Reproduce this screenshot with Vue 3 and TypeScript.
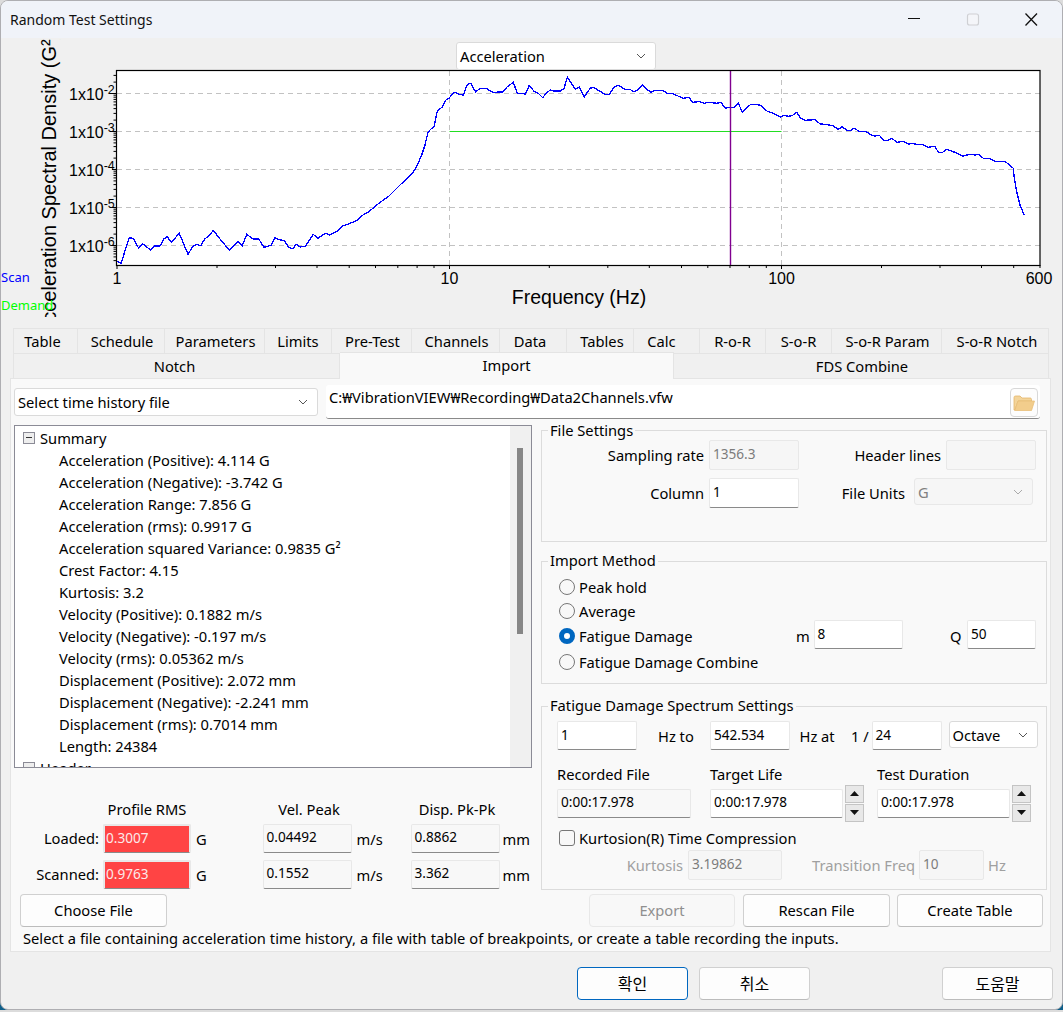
<script setup lang="ts">
const scale = (pts: number[], ox: number, oy: number): string[] => {
  const out: string[] = []
  for (let i = 0; i < pts.length; i += 2) out.push(`${(ox + pts[i] / 3).toFixed(1)},${(oy + pts[i + 1] / 3).toFixed(1)}`)
  return out
}
const segA = [0,137,15,145,40,68,52,70,68,100,80,86,104,106,115,93,132,93,143,72,154,65,166,82,190,55,216,118,232,92,243,88,254,92,266,72,280,62,292,46,312,72,340,106,366,80,379,92,392,58,412,72,428,72,444,97,465,91,477,68,490,74,505,77,518,97,530,101,541,88,553,96,568,94,592,58,605,70,628,55,642,60,665,48,678,33,698,27,718,18]
const segB = [20,452,40,434,55,427,80,405,100,390,115,380,150,345,185,312,200,290,215,255,225,225,233,190,240,180,253,168,260,130,265,120,276,112,288,90,298,84,312,66,325,72,340,76,352,43,362,40,377,66,390,55,408,55,428,67,458,66,470,52,490,37,502,70,526,72,538,46,552,64,565,70,578,83,592,66,602,60,612,63,632,63,642,55,652,22,676,58,688,52,703,80,717,60]
const segC = [0,55,10,52,30,64,45,73,58,73,72,52,85,46,105,58,120,58,132,66,145,58,157,44,170,58,183,67,193,61,220,62,232,70,250,71,278,85,298,82,307,97,328,95,342,100,358,97,380,100,393,97,406,115,415,112,433,112,445,100,457,126,482,103,510,105,532,124,550,130,572,142,580,136,596,139,608,136,620,127,632,145,644,151,662,150,675,148,690,162]
const segD = [14,43,38,47,55,58,67,50,80,61,92,61,102,55,118,64,135,64,155,75,165,78,178,76,192,91,205,91,216,85,230,97,250,94,268,103,275,100,290,103,310,104,325,112,345,109,355,127,368,127,380,118,410,129,428,139,448,133,465,135,475,133,490,145,510,146,525,154,555,154,580,175,583,205,590,245,600,285,613,316]
const curve = [...scale(segA, 116, 215), ...scale(segB, 350, 70), ...scale(segC, 590, 70), ...scale(segD, 820, 110)].join(' ')

const fx = (f: number) => 117 + 332.25 * Math.log10(f)
const fy = (v: number) => 93.5 - 38 * (Math.log10(v) + 2)
const xMinor: number[] = []
const yMinor: number[] = []
for (let k = 0; k < 3; k++) for (let m = 2; m <= 9; m++) { const f = m * 10 ** k; if (f <= 600) xMinor.push(fx(f)) }
for (let k = -7; k < -1; k++) for (let m = 1; m <= 9; m++) { const y = fy(m * 10 ** k); if (y > 71 && y < 265) yMinor.push(y) }
const decades = [{ y: 93.5, e: '-2' }, { y: 131.5, e: '-3' }, { y: 169.5, e: '-4' }, { y: 207.5, e: '-5' }, { y: 245.5, e: '-6' }]
const xMajor = [{ x: 117, t: '1' }, { x: 449.5, t: '10' }, { x: 781.5, t: '100' }]

// nudge: horizontal shift of a tab's caption from the centre, as in the original control
const tabsTop = [
  { t: 'Table', w: 65, nudge: -3 }, { t: 'Schedule', w: 87, nudge: 1 }, { t: 'Parameters', w: 100, nudge: 1 }, { t: 'Limits', w: 67, nudge: 0 },
  { t: 'Pre-Test', w: 80, nudge: 1 }, { t: 'Channels', w: 88, nudge: 1 }, { t: 'Data', w: 67, nudge: -3 }, { t: 'Tables', w: 67, nudge: 2 },
  { t: 'Calc', w: 66, nudge: -5 }, { t: 'R-o-R', w: 66, nudge: 0 }, { t: 'S-o-R', w: 66, nudge: 0 }, { t: 'S-o-R Param', w: 110, nudge: 1 }, { t: 'S-o-R Notch', w: 107, nudge: 2 }
]
const tabsBottom = [
  { t: 'Notch', w: 327, on: false, nudge: -2 }, { t: 'Import', w: 334, on: true, nudge: 0 }, { t: 'FDS Combine', w: 375, on: false, nudge: 1 }
]
const tabStyle = (t: { w: number; nudge: number }) => ({
  width: t.w + 'px',
  paddingLeft: Math.max(t.nudge, 0) * 2 + 'px',
  paddingRight: Math.max(-t.nudge, 0) * 2 + 'px'
})
const summary = [
  'Acceleration (Positive): 4.114 G', 'Acceleration (Negative): -3.742 G', 'Acceleration Range: 7.856 G',
  'Acceleration (rms): 0.9917 G', 'Acceleration squared Variance: 0.9835 G²', 'Crest Factor: 4.15', 'Kurtosis: 3.2',
  'Velocity (Positive): 0.1882 m/s', 'Velocity (Negative): -0.197 m/s', 'Velocity (rms): 0.05362 m/s',
  'Displacement (Positive): 2.072 mm', 'Displacement (Negative): -2.241 mm', 'Displacement (rms): 0.7014 mm', 'Length: 24384'
]
const metrics = [
  { label: 'Loaded:', rms: '0.3007', vel: '0.04492', disp: '0.8862' },
  { label: 'Scanned:', rms: '0.9763', vel: '0.1552', disp: '3.362' }
]
const path = 'C:₩VibrationVIEW₩Recording₩Data2Channels.vfw'
</script>

<template>
  <div class="window">
    <header class="titlebar">
      <span class="title">Random Test Settings</span>
      <svg class="caption" width="140" height="37" viewBox="0 0 140 37">
        <path d="M8 17.5H20" stroke="#111" stroke-width="1.2" fill="none" />
        <rect x="67.5" y="13" width="11" height="11" rx="2" fill="#f4f5f9" stroke="#cfd0d4" stroke-width="1.2" />
        <path d="M125.5 12.5L137 24.5M137 12.5L125.5 24.5" stroke="#111" stroke-width="1.3" fill="none" />
      </svg>
    </header>

    <section class="chart">
      <svg class="plot" width="1061" height="290" viewBox="1 38 1061 290">
        <defs>
          <clipPath id="ytitle"><rect x="0" y="39" width="70" height="278" /></clipPath>
        </defs>
        <rect x="117" y="71" width="923" height="194" fill="#fff" />
        <g stroke="#c2c2c2" stroke-width="1" stroke-dasharray="5 4" fill="none">
          <path v-for="d in decades" :key="d.e" :d="`M117 ${d.y}H1040`" />
          <path d="M449.5 71V265M781.5 71V265" />
        </g>
        <path d="M449.5 131.5H781.5" stroke="#22dd22" stroke-width="1.2" fill="none" />
        <polyline :points="curve" fill="none" stroke="#0000ff" stroke-width="1.3" shape-rendering="crispEdges" />
        <path d="M730.5 71V265" stroke="#800090" stroke-width="1.4" fill="none" />
        <rect x="116.5" y="70.5" width="923.5" height="195" fill="none" stroke="#000" stroke-width="1.2" />
        <g stroke="#000" stroke-width="1" fill="none">
          <path v-for="(x, i) in xMinor" :key="'xm' + i" :d="`M${x.toFixed(1)} 265V268`" />
          <path v-for="m in xMajor" :key="m.t" :d="`M${m.x} 265V269`" />
          <path v-for="(y, i) in yMinor" :key="'ym' + i" :d="`M116 ${y.toFixed(1)}H113.5`" />
          <path v-for="d in decades" :key="'yd' + d.e" :d="`M116 ${d.y}H112`" />
        </g>
        <text v-for="d in decades" :key="'l' + d.e" class="tick" x="69" :y="d.y + 6">1x10<tspan class="sup" dy="-6">{{ d.e }}</tspan></text>
        <text v-for="m in xMajor" :key="'t' + m.t" class="tick" :x="m.x" y="284" text-anchor="middle">{{ m.t }}</text>
        <text class="tick" x="1039" y="284" text-anchor="middle">600</text>
        <text class="axis" x="579" y="304" text-anchor="middle">Frequency (Hz)</text>
        <g clip-path="url(#ytitle)">
          <text class="axis axis-y" transform="translate(56 335) rotate(-90)">Acceleration Spectral Density (G²)</text>
        </g>
        <text class="legend-scan" x="1" y="282">Scan</text>
        <text class="legend-demand" x="1" y="310">Demand</text>
      </svg>
      <div class="combo chart-combo">
        <span>Acceleration</span>
        <svg class="chev" width="10" height="6" viewBox="0 0 10 6"><path d="M1 1L5 5L9 1" fill="none" stroke="#555" stroke-width="1" /></svg>
      </div>
    </section>

    <nav class="tabs">
      <div class="tab-row">
        <div v-for="t in tabsTop" :key="t.t" class="tab" :style="tabStyle(t)">{{ t.t }}</div>
      </div>
      <div class="tab-row second">
        <div v-for="t in tabsBottom" :key="t.t" class="tab" :class="{ active: t.on }" :style="tabStyle(t)">{{ t.t }}</div>
      </div>
    </nav>

    <main class="panel">
      <div class="file-row">
        <div class="combo file-combo">
          <span>Select time history file</span>
          <svg class="chev" width="10" height="6" viewBox="0 0 10 6"><path d="M1 1L5 5L9 1" fill="none" stroke="#555" stroke-width="1" /></svg>
        </div>
        <div class="path">
          <span>{{ path }}</span>
          <div class="folder">
            <svg width="22" height="18" viewBox="0 0 22 18">
              <path d="M1 3.5C1 2.6 1.6 2 2.5 2H7L9 4H17C18 4 18.5 4.6 18.5 5.5V7H5L2 16H1Z" fill="#f3d49a" stroke="#e3b56a" stroke-width=".8" />
              <path d="M5 7H21.5L18.5 16.5H1.8Z" fill="#f2cd8c" stroke="#e8bf7a" stroke-width=".8" />
            </svg>
          </div>
        </div>
      </div>

      <div class="body">
        <div class="left">
          <div class="tree">
            <div class="tree-list">
              <div class="node root"><i class="minus"></i>Summary</div>
              <div v-for="s in summary" :key="s" class="node leaf">{{ s }}</div>
              <div class="node root"><i class="minus"></i>Header</div>
            </div>
            <div class="scroll"><div class="thumb"></div></div>
          </div>
          <div class="metrics m-heads">
            <div class="m-head first">Profile RMS</div>
            <div></div>
            <div class="m-head">Vel. Peak</div>
            <div></div>
            <div class="m-head">Disp. Pk-Pk</div>
            <div></div>
          </div>
          <div v-for="m in metrics" :key="m.label" class="metrics m-row">
            <div class="m-label">{{ m.label }}</div>
            <div class="field alarm">{{ m.rms }}</div>
            <div class="m-unit">G</div>
            <div class="field soft">{{ m.vel }}</div>
            <div class="m-unit">m/s</div>
            <div class="field soft">{{ m.disp }}</div>
            <div class="m-unit mm">mm</div>
          </div>
        </div>

        <div class="right">
          <section class="group file-group">
            <div class="legend">File Settings</div>
            <div class="row">
              <label class="lab lab-a">Sampling rate</label>
              <div class="field disabled w90 ml5">1356.3</div>
              <label class="lab lab-b">Header lines</label>
              <div class="field disabled w90 ml5"></div>
            </div>
            <div class="row r2">
              <label class="lab lab-a">Column</label>
              <div class="field w90 ml5">1</div>
              <label class="lab lab-c">File Units</label>
              <div class="combo disabled-combo">
                <span>G</span>
                <svg class="chev" width="10" height="6" viewBox="0 0 10 6"><path d="M1 1L5 5L9 1" fill="none" stroke="#aaa" stroke-width="1" /></svg>
              </div>
            </div>
          </section>

          <section class="group import-group">
            <div class="legend">Import Method</div>
            <div class="radio-row h24"><span class="radio"></span>Peak hold</div>
            <div class="radio-row h22"><span class="radio"></span>Average</div>
            <div class="radio-row h29">
              <div class="radio-cell low"><span class="radio on"></span>Fatigue Damage</div>
              <span class="mq low">m</span>
              <div class="field m-input">8</div>
              <span class="mq q low">Q</span>
              <div class="field q-input">50</div>
            </div>
            <div class="radio-row h24"><span class="radio"></span>Fatigue Damage Combine</div>
          </section>

          <section class="group fds-group">
            <div class="legend">Fatigue Damage Spectrum Settings</div>
            <div class="fds-row">
              <div class="field w80">1</div>
              <span class="fds-t t1">Hz to</span>
              <div class="field w80">542.534</div>
              <span class="fds-t t2">Hz at</span>
              <span class="fds-t t3">1 /</span>
              <div class="field w71">24</div>
              <div class="combo octave"><span>Octave</span>
                <svg class="chev" width="10" height="6" viewBox="0 0 10 6"><path d="M1 1L5 5L9 1" fill="none" stroke="#555" stroke-width="1" /></svg>
              </div>
            </div>
            <div class="fds-labels">
              <span class="c1">Recorded File</span><span class="c2">Target Life</span><span class="c3">Test Duration</span>
            </div>
            <div class="fds-times">
              <div class="field soft w134">0:00:17.978</div>
              <div class="field w133 ml19">0:00:17.978</div>
              <div class="spin">
                <button class="spin-b" type="button"><svg width="9" height="5" viewBox="0 0 9 5"><path d="M4.5 0L9 5H0Z" fill="#111" /></svg></button>
                <button class="spin-b" type="button"><svg width="9" height="5" viewBox="0 0 9 5"><path d="M0 0H9L4.5 5Z" fill="#111" /></svg></button>
              </div>
              <div class="field w133 ml13">0:00:17.978</div>
              <div class="spin">
                <button class="spin-b" type="button"><svg width="9" height="5" viewBox="0 0 9 5"><path d="M4.5 0L9 5H0Z" fill="#111" /></svg></button>
                <button class="spin-b" type="button"><svg width="9" height="5" viewBox="0 0 9 5"><path d="M0 0H9L4.5 5Z" fill="#111" /></svg></button>
              </div>
            </div>
            <div class="check-row"><span class="check"></span>Kurtosion(R) Time Compression</div>
            <div class="kurt-row">
              <span class="lab gray lab-k">Kurtosis</span>
              <div class="field disabled k1">3.19862</div>
              <span class="lab gray lab-t">Transition Freq</span>
              <div class="field disabled k2">10</div>
              <span class="gray hz">Hz</span>
            </div>
          </section>
        </div>
      </div>

      <div class="actions">
        <button class="btn choose" type="button">Choose File</button>
        <button class="btn off" type="button">Export</button>
        <button class="btn rescan" type="button">Rescan File</button>
        <button class="btn create" type="button">Create Table</button>
      </div>
      <p class="hint">Select a file containing acceleration time history, a file with table of breakpoints, or create a table recording the inputs.</p>
    </main>

    <footer class="footer">
      <button class="btn dlg primary" type="button">확인</button>
      <button class="btn dlg cancel" type="button">취소</button>
      <button class="btn dlg help" type="button">도움말</button>
    </footer>
  </div>
</template>

<style>
html, body { margin: 0; background: linear-gradient(#dcdcdc 0 1000px, #0f5f8a 1000px); }
</style>

<style scoped>
.window {
  --ui: "Noto Sans", "Noto Sans CJK KR", sans-serif;
  box-sizing: border-box;
  width: 1063px;
  height: 1010px;
  border: 1px solid #aeaeb2;
  border-radius: 8px;
  background: #f0f0f0;
  overflow: hidden;
  font-family: var(--ui);
  font-size: 14.7px;
  color: #000;
}
.titlebar {
  height: 37px;
  display: flex;
  align-items: center;
  justify-content: space-between;
  background: #f0f3f9;
}
.title { margin-left: 9px; margin-top: -1px; color: #111; font-size: 14px; }
.caption { margin-right: 22px; }
.chart { position: relative; height: 290px; }
.plot { display: block; }
.tick { font-family: "Liberation Sans", sans-serif; font-size: 16px; fill: #000; }
.sup { font-size: 12.5px; }
.axis { font-family: "Liberation Sans", sans-serif; font-size: 19.5px; fill: #000; }
.axis-y { font-size: 20px; }
.legend-scan, .legend-demand { font-family: var(--ui); font-size: 13px; }
.legend-scan { fill: #0000ff; }
.legend-demand { fill: #00ff00; }
.combo {
  box-sizing: border-box;
  display: flex;
  align-items: center;
  justify-content: space-between;
  background: #fff;
  border: 1px solid #dadada;
  border-radius: 3px;
  padding: 0 9px 0 3px;
}
.chart-combo { position: absolute; left: 455px; top: 4px; width: 200px; height: 28px; }
.tabs { margin-left: 12px; }
.tab-row { display: flex; height: 25px; }
.tab {
  box-sizing: border-box;
  display: flex;
  align-items: center;
  justify-content: center;
  border: 1px solid #e4e4e4;
  border-bottom: 0;
  background: #f0f0f0;
  padding-bottom: 0;
}
.tab + .tab { border-left: 0; }
.tab.active {
  position: relative;
  z-index: 1;
  height: 27px;
  margin-top: -1px;
  background: #f9f9f9;
  padding-bottom: 2px;
}
.panel {
  box-sizing: border-box;
  position: relative;
  margin-left: 9px;
  width: 1041px;
  height: 574px;
  background: #f9f9f9;
  border: 1px solid #e4e4e4;
  padding: 6px 0 0 3px;
}
.file-row { display: flex; align-items: flex-start; }
.file-combo { width: 304px; height: 28px; margin-top: 3px; padding-left: 3px; }
.path {
  box-sizing: border-box;
  width: 714px;
  height: 34px;
  margin-left: 8px;
  display: flex;
  justify-content: space-between;
  background: #fff;
  border-bottom: 1px solid #8a8a8a;
  border-radius: 3px;
  padding: 2px 2px 0 3px;
}
.folder {
  box-sizing: border-box;
  width: 28px;
  height: 29px;
  margin-top: 1px;
  display: flex;
  align-items: center;
  justify-content: center;
  background: #fdfdfd;
  border: 1px solid #d8d8d8;
  border-radius: 4px;
}
.body { display: flex; margin-top: 6px; height: 464px; }
.left { width: 518px; }
.right { width: 506px; margin-left: 9px; padding-top: 5px; }
.tree {
  box-sizing: border-box;
  height: 343px;
  display: flex;
  overflow: hidden;
  background: #fff;
  border: 1px solid #8b8b96;
}
.tree-list { flex: 1; padding-top: 1px; }
.node { height: 22px; line-height: 22px; white-space: nowrap; }
.root { display: flex; align-items: center; padding-left: 8px; }
.leaf { padding-left: 44px; }
.minus {
  box-sizing: border-box;
  position: relative;
  width: 12px;
  height: 12px;
  margin-right: 5px;
  background: #eeeeee;
  border: 1px solid #8b8b96;
}
.minus::after { content: ""; position: absolute; left: 2px; right: 2px; top: 4px; height: 1px; background: #333; }
.scroll { width: 21px; background: #f0f0f0; }
.thumb { width: 6px; height: 186px; margin: 22px 0 0 7px; background: #868686; }
.metrics {
  display: grid;
  grid-template-columns: 89px 88px 71.5px 89px 59px 89px 33px;
  align-items: center;
  height: 20px;
  margin-top: 31px;
}
.m-heads { line-height: 18px; }
.m-head { text-align: center; white-space: nowrap; }
.m-head.first { grid-column: 2; }
.m-head:nth-child(3) { grid-column: 4; margin-left: 4px; }
.m-head:nth-child(5) { grid-column: 6; margin-left: 4px; }
.m-row { height: 29px; margin-top: 5px; }
.m-row + .m-row { margin-top: 7px; }
.m-label { text-align: right; padding: 0 4px 1px 0; }
.m-unit { padding-left: 5px; padding-top: 1px; }
.m-unit.mm { padding-left: 3px; }
.field {
  box-sizing: border-box;
  height: 29px;
  display: flex;
  align-items: center;
  background: #fff;
  border: 1px solid #e8e8e8;
  border-bottom-color: #8a8a8a;
  border-radius: 2px;
  padding: 0 0 3px 3px;
  white-space: nowrap;
  font-size: 13.6px;
}
.alarm { background: #ff4444; color: #fbeaea; border-color: #e8e8e8 #e8e8e8 #8a8a8a; border-width: 2px 2px 1px; padding: 0 0 4px 1px; }
.soft { background: #f8f8f8; padding-bottom: 4px; }
.group {
  box-sizing: border-box;
  border: 1px solid #dcdcdc;
  background: #f9f9f9;
}
.legend {
  width: fit-content;
  height: 20px;
  line-height: 18px;
  margin: -11px 0 0 6px;
  padding: 0 2px;
  background: #f9f9f9;
}
.file-group { height: 112px; }
.file-group .legend { line-height: 20px; }
.import-group { height: 123px; margin-top: 19px; }
.fds-group { height: 184px; margin-top: 22px; }
.row { display: flex; align-items: center; height: 30px; }
.r2 { margin-top: 8px; }
.lab { display: block; text-align: right; white-space: nowrap; }
.lab-a { width: 162px; }
.lab-b { width: 142px; }
.lab-c { width: 106px; }
.lab-k { width: 126px; }
.lab-t { width: 133px; }
.ml5 { margin-left: 5px; }
.w90 { width: 90px; height: 30px; }
.disabled { background: #f6f6f6; border-color: #e8e8e8; color: #7c7c7c; }
.disabled-combo {
  width: 119px;
  height: 27px;
  margin-left: 9px;
  margin-top: -3px;
  background: #f6f6f6;
  border-color: #e8e8e8;
  color: #808080;
}
.import-group .legend { margin-bottom: 3px; }
.radio-row { box-sizing: border-box; display: flex; align-items: center; padding-left: 17px; white-space: nowrap; }
.h24 { height: 24px; padding-top: 2px; }
.h22 { height: 22px; padding-top: 3px; }
.h29 { height: 29px; }
.radio {
  box-sizing: border-box;
  flex: none;
  width: 16px;
  height: 16px;
  margin-right: 4px;
  border: 1px solid #777;
  border-radius: 50%;
  background: #f8f8f8;
}
.radio.on { border: 5px solid #0067c0; background: #fff; }
.radio-cell { display: flex; align-items: center; width: 237px; }
.low { position: relative; top: 1px; }
.mq { width: 17.5px; }
.q { margin-left: 47.5px; width: 17px; }
.m-input { width: 89px; }
.q-input { width: 69px; }
.fds-row { display: flex; align-items: center; height: 29px; margin: 5px 0 0 15px; }
.fds-t { display: block; white-space: nowrap; }
.t1 { margin-left: 21px; width: 52px; }
.t2 { margin-left: 9.5px; width: 51.5px; }
.t3 { width: 20.5px; }
.w80 { width: 80px; }
.w71 { width: 70.5px; }
.octave { width: 89px; height: 27px; margin-left: 6.5px; margin-top: -2px; padding-right: 9px; }
.fds-labels { display: flex; height: 20px; line-height: 20px; margin: 14px 0 0 15px; }
.c1 { width: 153px; }
.c2 { width: 167px; }
.fds-times { display: flex; align-items: center; height: 38px; margin-left: 15px; }
.w134 { width: 134px; padding-left: 3px; }
.w133 { width: 133px; }
.ml19 { margin-left: 19px; }
.ml13 { margin-left: 13px; }
.spin { display: flex; flex-direction: column; gap: 1px; margin-left: 2px; }
.spin-b {
  box-sizing: border-box;
  width: 19px;
  height: 18px;
  padding: 0;
  display: flex;
  align-items: center;
  justify-content: center;
  background: #e8e8e8;
  border: 1px solid #c4c4c4;
}
.check-row { display: flex; align-items: center; height: 21px; margin: 5px 0 0 17px; white-space: nowrap; }
.check {
  box-sizing: border-box;
  width: 16px;
  height: 16px;
  margin-right: 4px;
  background: #f8f8f8;
  border: 1px solid #777;
  border-radius: 3px;
}
.kurt-row { display: flex; align-items: center; height: 30px; margin: 2px 0 0 15px; }
.gray { color: #a0a0a0; }
.k1 { width: 94px; height: 30px; margin-left: 5px; border-bottom-color: #e8e8e8; }
.k2 { width: 65px; height: 30px; margin-left: 4px; border-bottom-color: #e8e8e8; }
.hz { margin-left: 4px; }
.actions { display: flex; margin-top: 5px; }
.btn {
  box-sizing: border-box;
  height: 33px;
  padding: 0 0 2px;
  font: inherit;
  color: #000;
  background: #fdfdfd;
  border: 1px solid #d0d0d0;
  border-bottom-color: #bcbcbc;
  border-radius: 4px;
}
.choose { width: 147px; margin-left: 6px; }
.off { width: 146px; margin-left: 422px; color: #8f8f8f; background: #f8f8f8; border-color: #e8e8e8; }
.rescan { width: 147px; margin-left: 8px; }
.create { width: 146px; margin-left: 7px; }
.hint { margin: 1px 0 0 9px; height: 20px; line-height: 20px; white-space: nowrap; word-spacing: .15px; }
.footer { display: flex; padding: 15px 0 0 576px; }
.dlg { width: 111px; font-family: "Noto Sans CJK KR", sans-serif; font-size: 16px; }
.primary { border: 1px solid #0067c0; }
.cancel { margin-left: 11px; }
.help { margin-left: 132px; }
</style>
